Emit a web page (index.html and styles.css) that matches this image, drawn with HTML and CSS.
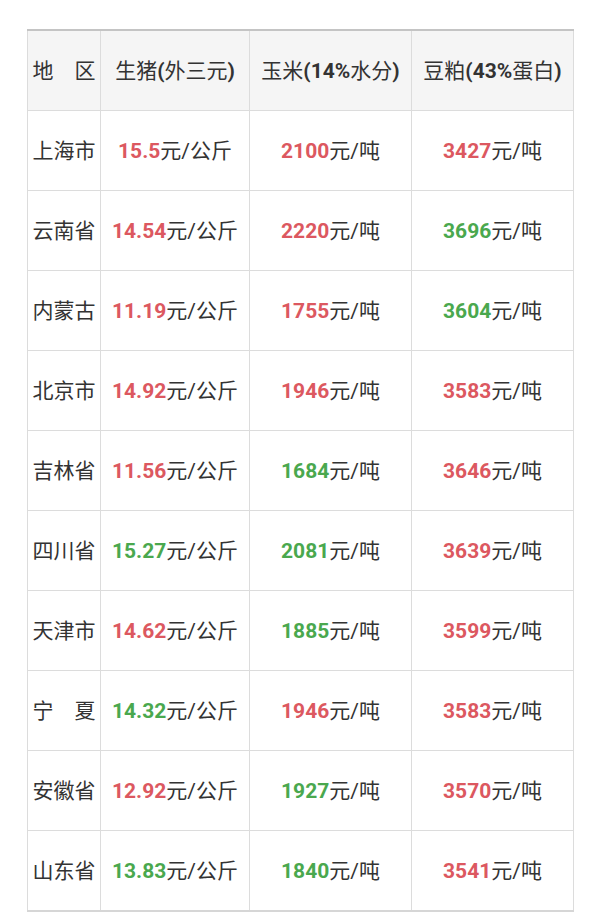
FILE: index.html
```html
<!DOCTYPE html>
<html lang="zh-CN">
<head>
<meta charset="utf-8">
<title>价格表</title>
<link rel="stylesheet" href="styles.css">
</head>
<body>
<table class="price-table">
  <colgroup>
    <col class="c1"><col class="c2"><col class="c3"><col class="c4">
  </colgroup>
  <thead>
    <tr>
      <th>地　区</th>
      <th>生猪<b>(</b>外三元<b>)</b></th>
      <th>玉米<b>(14%</b>水分<b>)</b></th>
      <th>豆粕<b>(43%</b>蛋白<b>)</b></th>
    </tr>
  </thead>
  <tbody>
    <tr><td>上海市</td><td><span class="up">15.5</span>元/公斤</td><td><span class="up">2100</span>元/吨</td><td><span class="up">3427</span>元/吨</td></tr>
    <tr><td>云南省</td><td><span class="up">14.54</span>元/公斤</td><td><span class="up">2220</span>元/吨</td><td><span class="down">3696</span>元/吨</td></tr>
    <tr><td>内蒙古</td><td><span class="up">11.19</span>元/公斤</td><td><span class="up">1755</span>元/吨</td><td><span class="down">3604</span>元/吨</td></tr>
    <tr><td>北京市</td><td><span class="up">14.92</span>元/公斤</td><td><span class="up">1946</span>元/吨</td><td><span class="up">3583</span>元/吨</td></tr>
    <tr><td>吉林省</td><td><span class="up">11.56</span>元/公斤</td><td><span class="down">1684</span>元/吨</td><td><span class="up">3646</span>元/吨</td></tr>
    <tr><td>四川省</td><td><span class="down">15.27</span>元/公斤</td><td><span class="down">2081</span>元/吨</td><td><span class="up">3639</span>元/吨</td></tr>
    <tr><td>天津市</td><td><span class="up">14.62</span>元/公斤</td><td><span class="down">1885</span>元/吨</td><td><span class="up">3599</span>元/吨</td></tr>
    <tr><td>宁　夏</td><td><span class="down">14.32</span>元/公斤</td><td><span class="up">1946</span>元/吨</td><td><span class="up">3583</span>元/吨</td></tr>
    <tr><td>安徽省</td><td><span class="up">12.92</span>元/公斤</td><td><span class="down">1927</span>元/吨</td><td><span class="up">3570</span>元/吨</td></tr>
    <tr><td>山东省</td><td><span class="down">13.83</span>元/公斤</td><td><span class="down">1840</span>元/吨</td><td><span class="up">3541</span>元/吨</td></tr>
  </tbody>
</table>
</body>
</html>
```

FILE: styles.css
```css
html, body {
  margin: 0;
  padding: 0;
  background: #ffffff;
}
body {
  font-family: Roboto, "Noto Sans CJK SC", sans-serif;
  color: #333333;
  font-size: 21px;
}
.price-table {
  margin: 29px 0 0 27px;
  border-collapse: collapse;
  table-layout: fixed;
  width: 546px;
  border-top: 2px solid #c4c4c4;
  border-bottom: 2px solid #d6d6d6;
}
.c1 { width: 73px; }
.c2 { width: 149px; }
.c3 { width: 162px; }
.c4 { width: 162px; }
.price-table th,
.price-table td {
  border: 1px solid #dcdcdc;
  height: 79px;
  padding: 0;
  text-align: center;
  vertical-align: middle;
  white-space: nowrap;
  line-height: 24px;
}
.price-table th {
  background: #f5f5f5;
  font-weight: normal;
}
.price-table th b {
  font-weight: bold;
}
.up {
  color: #dc5860;
  font-weight: bold;
}
.down {
  color: #4aa84e;
  font-weight: bold;
}
```
